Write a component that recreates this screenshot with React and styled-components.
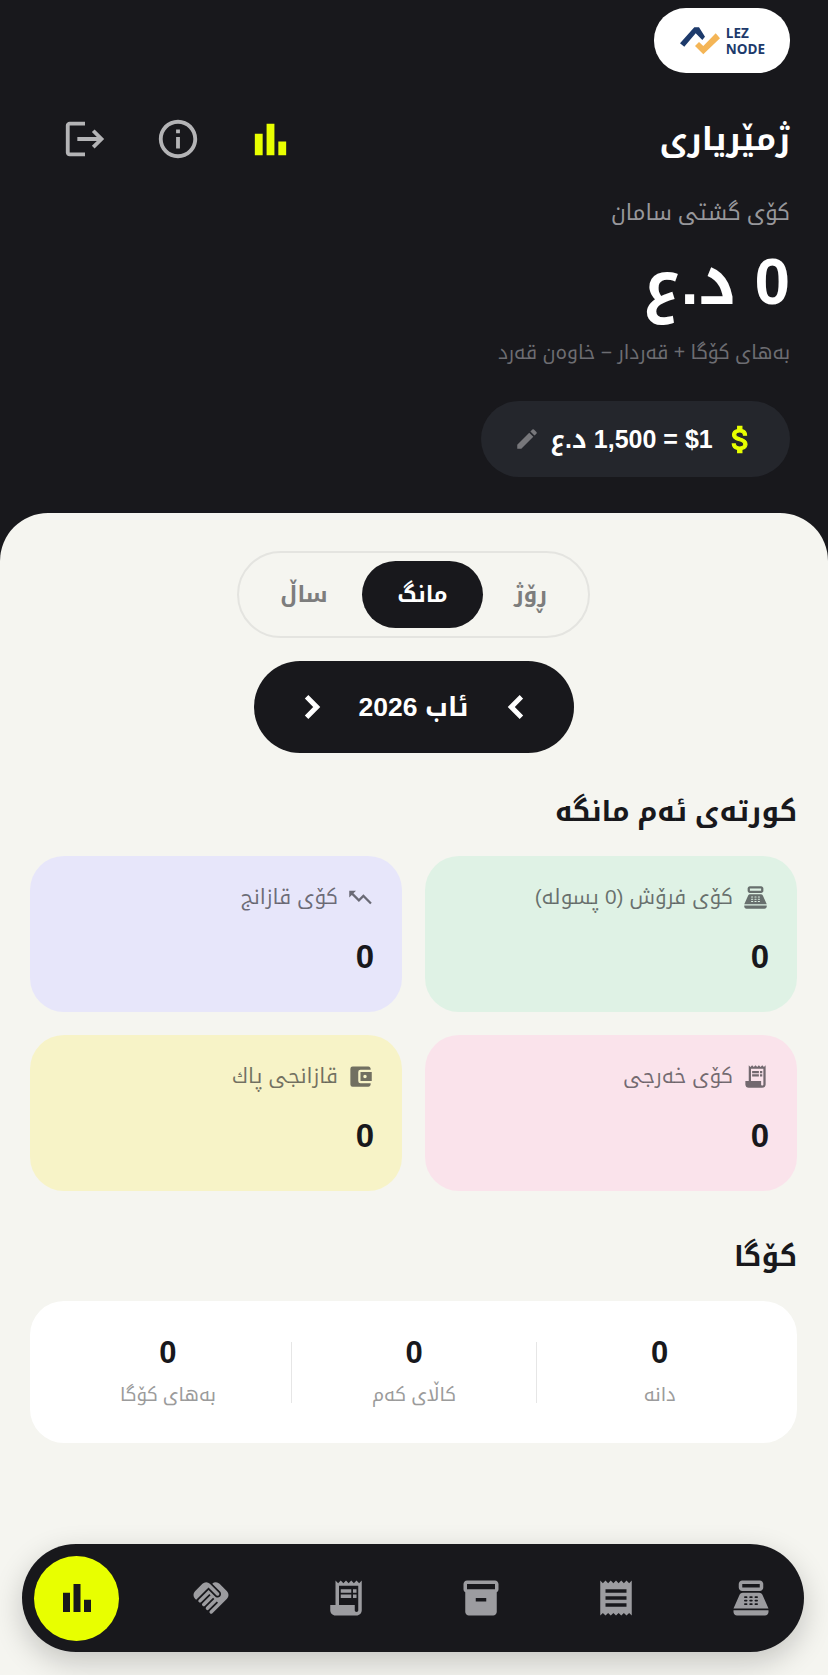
import styled, { createGlobalStyle } from "styled-components";
import {
  MdLogout,
  MdInfoOutline,
  MdBarChart,
  MdAttachMoney,
  MdEdit,
  MdChevronLeft,
  MdChevronRight,
  MdPointOfSale,
  MdTrendingUp,
  MdReceiptLong,
  MdAccountBalanceWallet,
  MdHandshake,
  MdInventory2,
  MdReceipt,
} from "react-icons/md";

const GlobalStyle = createGlobalStyle`
  * { box-sizing: border-box; }
  html, body { margin: 0; padding: 0; background: #18181c; }
  body { font-family: "Liberation Sans", "Noto Kufi Arabic", "DejaVu Sans", sans-serif; }
  svg path[fill="none"] { stroke: none; }
`;

const Page = styled.div`
  direction: rtl;
  width: 828px;
  height: 1675px;
  position: relative;
  overflow: hidden;
  display: flex;
  flex-direction: column;
  background: #18181c;
`;

const Header = styled.header`
  height: 513px;
  padding: 8px 38px 0 39px;
  display: flex;
  flex-direction: column;
  align-items: flex-start;
`;

const LogoPill = styled.div`
  direction: ltr;
  width: 136px;
  height: 65px;
  border-radius: 32px;
  background: #fff;
  display: flex;
  align-items: center;
  justify-content: center;
  gap: 5px;
`;

const LogoText = styled.div`
  font-family: "Open Sans", sans-serif;
  font-size: 13.5px;
  line-height: 16px;
  font-weight: 700;
  color: #1d3a6b;
`;

const TitleRow = styled.div`
  width: 100%;
  margin-top: 42px;
  padding-left: 23px;
  height: 48px;
  display: flex;
  align-items: center;
  justify-content: space-between;
`;

const Title = styled.h1`
  margin: 0;
  font-size: 32px;
  line-height: 48px;
  font-weight: 700;
  color: #fff;
`;

const HeaderIcons = styled.div`
  display: flex;
  align-items: center;
  gap: 47px;
  font-size: 46px;
  color: #b4b4b6;
`;

const ChartIcon = styled(MdBarChart)`
  color: #e8ff00;
  font-size: 47px;
  margin: 0 -3.5px 0 -1px;
`;

const Caption = styled.div`
  margin-top: 26px;
  font-size: 22px;
  line-height: 48px;
  color: #97979b;
`;

const Total = styled.div`
  font-size: 64px;
  font-weight: 700;
  line-height: 70px;
  margin-top: 10px;
  color: #fff;
`;

const Note = styled.div`
  margin-top: 23px;
  font-size: 19.4px;
  line-height: 24px;
  color: #6d6d72;
`;

const RatePill = styled.div`
  margin-top: 37px;
  width: 309px;
  height: 76px;
  border-radius: 38px;
  background: #24262c;
  padding: 0 32px 0 33px;
  display: flex;
  align-items: center;
  gap: 8px;
  color: #fff;
  font-size: 25px;
  line-height: 30px;
  font-weight: 700;
`;

const DollarIcon = styled(MdAttachMoney)`
  color: #e8ff00;
  font-size: 35px;
  flex: none;
  stroke: currentColor;
  stroke-width: 0.7;
`;

const RateText = styled.span`
  flex: 1;
  white-space: nowrap;
  text-align: center;
`;

const EditIcon = styled(MdEdit)`
  color: #77777b;
  font-size: 26px;
  flex: none;
`;

const Sheet = styled.main`
  flex: 1;
  background: #f5f5f0;
  border-radius: 48px 48px 0 0;
  padding: 38px 31px 0 30px;
  display: flex;
  flex-direction: column;
  align-items: center;
`;

const Toggle = styled.div`
  width: 353px;
  height: 87px;
  border: 2px solid #e4e4e0;
  border-radius: 44px;
  display: flex;
  align-items: center;
`;

const ToggleItem = styled.div`
  height: 67px;
  border-radius: 34px;
  display: flex;
  align-items: center;
  justify-content: center;
  font-size: 22px;
  line-height: 30px;
  font-weight: 700;
  width: ${(props) => props.$w}px;
  padding-right: ${(props) => props.$inset || 0}px;
  background: ${(props) => (props.$active ? "#18181c" : "transparent")};
  color: ${(props) => (props.$active ? "#fff" : "#7d7d7d")};
`;

const DatePill = styled.div`
  margin-top: 23px;
  width: 320px;
  height: 92px;
  border-radius: 46px;
  background: #18181c;
  padding: 0 36px;
  display: flex;
  align-items: center;
  justify-content: space-between;
  color: #fff;
  font-size: 26.5px;
  line-height: 32px;
  font-weight: 700;
  svg {
    font-size: 44px;
    flex: none;
    stroke: currentColor;
    stroke-width: 0.7;
  }
`;

const SectionTitle = styled.h2`
  align-self: flex-start;
  margin: ${(props) => props.$top}px 0 0 0;
  font-size: 28px;
  line-height: 40px;
  font-weight: 700;
  color: #18181c;
`;

const CardGrid = styled.div`
  width: 100%;
  margin-top: 24px;
  display: grid;
  grid-template-columns: 372px 372px;
  justify-content: space-between;
  row-gap: 23px;
`;

const Card = styled.div`
  height: 156px;
  border-radius: 34px;
  padding: 25px 28px 0 30px;
  background: ${(props) => props.$bg};
`;

const CardLabel = styled.div`
  display: flex;
  align-items: center;
  gap: 9px;
  height: 32px;
  font-size: 20.8px;
  line-height: 32px;
  color: rgba(24, 24, 28, 0.6);
  svg {
    font-size: 27px;
    flex: none;
  }
`;

const FlippedTrend = styled(MdTrendingUp)`
  transform: scaleX(-1);
`;

const CardValue = styled.div`
  margin-top: 25px;
  font-size: 33px;
  line-height: 38px;
  font-weight: 700;
  color: #18181c;
`;

const StockCard = styled.div`
  width: 100%;
  height: 142px;
  margin-top: 24px;
  border-radius: 34px;
  background: #fff;
  padding: 0 15px;
  display: grid;
  grid-template-columns: repeat(3, 1fr);
  align-items: center;
`;

const StockCell = styled.div`
  height: 61px;
  display: flex;
  flex-direction: column;
  align-items: center;
  justify-content: space-between;
  border-left: ${(props) => (props.$last ? "none" : "1px solid #e6e6e6")};
`;

const StockValue = styled.div`
  font-size: 31px;
  line-height: 30px;
  margin-top: -4px;
  font-weight: 700;
  color: #18181c;
`;

const StockLabel = styled.div`
  font-size: 18.7px;
  line-height: 24px;
  margin-bottom: -4px;
  color: #9b9b9b;
`;

const Dock = styled.nav`
  position: absolute;
  left: 22px;
  bottom: 23px;
  width: 782px;
  height: 108px;
  border-radius: 54px;
  background: #18181c;
  box-shadow: 0 10px 30px rgba(0, 0, 0, 0.2);
  padding: 0 11px 0 12px;
  display: flex;
  align-items: center;
  justify-content: space-between;
`;

const DockItem = styled.div`
  width: 85px;
  height: 85px;
  border-radius: 50%;
  display: flex;
  align-items: center;
  justify-content: center;
  font-size: 42px;
  background: ${(props) => (props.$active ? "#e8ff00" : "transparent")};
  color: ${(props) => (props.$active ? "#18181c" : "#9c9ca0")};
`;

function LogoMark() {
  return (
    <svg width="42" height="30" viewBox="0 0 42 30">
      <path d="M1 17.3 L15.3 1.3 L20 1.3 L26 10.7 L23.3 14 L16.7 7.3 L5.3 20.7 Z" fill="#1d3a6b" />
      <path d="M16 20 L24.3 28.3 L41 12.3 L36.7 7.3 L24.3 20 L20 16 Z" fill="#f4b556" />
    </svg>
  );
}

const cards = [
  { label: "کۆی فرۆش (0 پسولە)", bg: "#dff2e5", icon: <MdPointOfSale /> },
  { label: "کۆی قازانج", bg: "#e7e6fa", icon: <FlippedTrend /> },
  { label: "کۆی خەرجی", bg: "#fae3eb", icon: <MdReceiptLong /> },
  { label: "قازانجی پاك", bg: "#f7f3c7", icon: <MdAccountBalanceWallet /> },
];

const stock = ["دانە", "کاڵای کەم", "بەهای کۆگا"];

export default function App() {
  return (
    <Page>
      <GlobalStyle />
      <Header>
        <LogoPill>
          <LogoMark />
          <LogoText>
            LEZ
            <br />
            NODE
          </LogoText>
        </LogoPill>
        <TitleRow>
          <Title>ژمێریاری</Title>
          <HeaderIcons>
            <ChartIcon />
            <MdInfoOutline />
            <MdLogout />
          </HeaderIcons>
        </TitleRow>
        <Caption>کۆی گشتی سامان</Caption>
        <Total>0 د.ع</Total>
        <Note>بەهای کۆگا + قەردار − خاوەن قەرد</Note>
        <RatePill>
          <DollarIcon />
          <RateText>$1 = 1,500 د.ع</RateText>
          <EditIcon />
        </RatePill>
      </Header>
      <Sheet>
        <Toggle>
          <ToggleItem $w={105} $inset={10}>ڕۆژ</ToggleItem>
          <ToggleItem $w={121} $active>مانگ</ToggleItem>
          <ToggleItem $w={116}>ساڵ</ToggleItem>
        </Toggle>
        <DatePill>
          <MdChevronLeft />
          <span>ئاب 2026</span>
          <MdChevronRight />
        </DatePill>
        <SectionTitle $top={39}>کورتەی ئەم مانگە</SectionTitle>
        <CardGrid>
          {cards.map((card) => (
            <Card key={card.label} $bg={card.bg}>
              <CardLabel>
                {card.icon}
                <span>{card.label}</span>
              </CardLabel>
              <CardValue>0</CardValue>
            </Card>
          ))}
        </CardGrid>
        <SectionTitle $top={46}>کۆگا</SectionTitle>
        <StockCard>
          {stock.map((label, i) => (
            <StockCell key={label} $last={i === stock.length - 1}>
              <StockValue>0</StockValue>
              <StockLabel>{label}</StockLabel>
            </StockCell>
          ))}
        </StockCard>
      </Sheet>
      <Dock>
        <DockItem><MdPointOfSale /></DockItem>
        <DockItem><MdReceipt /></DockItem>
        <DockItem><MdInventory2 /></DockItem>
        <DockItem><MdReceiptLong /></DockItem>
        <DockItem><MdHandshake /></DockItem>
        <DockItem $active><MdBarChart /></DockItem>
      </Dock>
    </Page>
  );
}
